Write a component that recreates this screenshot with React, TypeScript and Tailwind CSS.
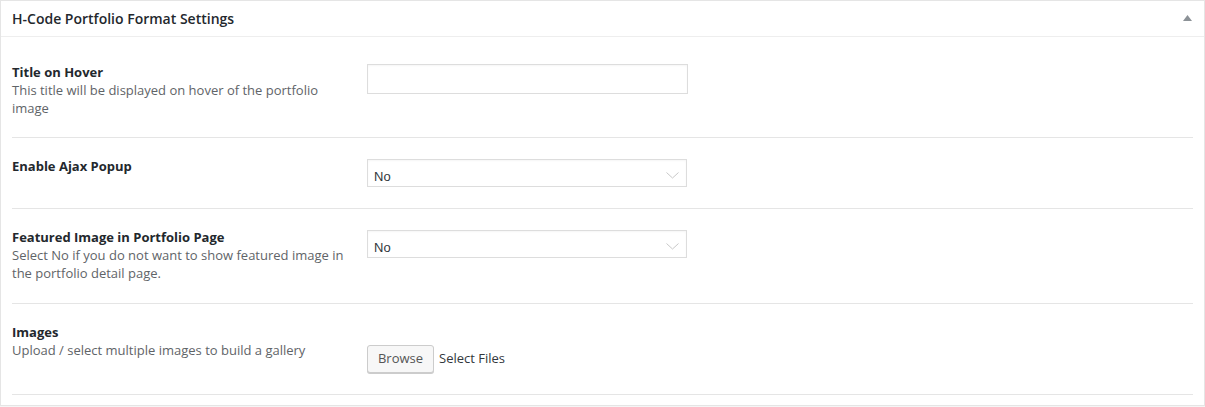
import React from "react";

const font = { fontFamily: '"Open Sans", "Noto Sans", sans-serif' };

function Chevron() {
  return (
    <svg width="13" height="7" viewBox="0 0 13 7" className="absolute right-[7px] top-[12px]">
      <polyline points="0.5,0.5 6.5,6 12.5,0.5" fill="none" stroke="#c8c8c8" strokeWidth="1" />
    </svg>
  );
}

function Select() {
  return (
    <div className="relative w-[320px] h-[28px] border border-[#dddddd] bg-white shadow-[inset_0_1px_2px_rgba(0,0,0,0.04)]">
      <span
        className="absolute left-[6px] top-[9px] text-[13px] leading-[15px] text-[#32373c]"
        style={{ fontFamily: '"Liberation Sans", Arial, sans-serif' }}
      >
        No
      </span>
      <Chevron />
    </div>
  );
}

function Row({
  label,
  desc,
  children,
  pb = "pb-[21px]",
}: {
  label: string;
  desc?: React.ReactNode;
  children: React.ReactNode;
  pb?: string;
}) {
  return (
    <div className={`flex border-b border-[#e5e5e5] pt-[19px] ${pb}`}>
      <div className="w-[355px] shrink-0 pr-[20px]">
        <div className="text-[13px] leading-[18px] font-bold text-[#23282d]">{label}</div>
        {desc && <div className="text-[13px] leading-[18px] text-[#5f6468]">{desc}</div>}
      </div>
      <div className="flex-1">{children}</div>
    </div>
  );
}

export default function App() {
  return (
    <div className="w-[1205px] h-[407px] bg-white" style={font}>
      <div className="border border-[#e5e5e5] bg-white h-[406px] shadow-[0_1px_1px_rgba(0,0,0,0.04)]">
        <div className="flex items-center justify-between h-[36px] border-b border-[#eeeeee] pl-[11px] pr-[12px]">
          <h2 className="text-[14px] leading-[18px] text-[#23282d] font-semibold">
            H-Code Portfolio Format Settings
          </h2>
          <svg width="9" height="6" viewBox="0 0 9 6" className="mb-[1px]">
            <polygon points="4.5,0 9,6 0,6" fill="#8c9297" />
          </svg>
        </div>
        <div className="px-[11px] pt-[7px]">
          <Row
            pb="pb-[20px]"
            label="Title on Hover"
            desc={
              <>
                This title will be displayed on hover of the portfolio
                <br />
                image
              </>
            }
          >
            <div className="pt-[1px]">
              <div className="w-[321px] h-[30px] border border-[#dddddd] bg-white shadow-[inset_0_1px_2px_rgba(0,0,0,0.04)]" />
            </div>
          </Row>
          <Row label="Enable Ajax Popup">
            <div className="pt-[2px]">
              <Select />
            </div>
          </Row>
          <Row
            label="Featured Image in Portfolio Page"
            desc={
              <>
                Select No if you do not want to show featured image in
                <br />
                the portfolio detail page.
              </>
            }
          >
            <div className="pt-[2px]">
              <Select />
            </div>
          </Row>
          <Row label="Images" desc="Upload / select multiple images to build a gallery">
            <div className="flex items-center gap-[5px] mt-[22px]">
              <div className="h-[28px] w-[67px] flex items-center justify-center rounded-[3px] border border-[#cccccc] bg-[#f7f7f7] shadow-[0_1px_0_#cccccc] text-[13px] text-[#555555]">
                Browse
              </div>
              <span className="text-[13px] text-[#32373c]">Select Files</span>
            </div>
          </Row>
        </div>
      </div>
    </div>
  );
}
